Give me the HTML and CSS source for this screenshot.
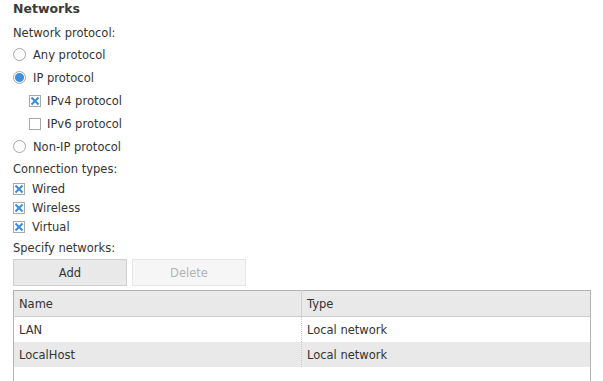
FILE: index.html
```html
<!DOCTYPE html>
<html lang="en">
  <head>
    <meta charset="UTF-8" />
    <title>Networks</title>
    <link rel="stylesheet" href="styles.css">
  </head>
  <body>
    <section class="networks">
      <h2 class="titel">Networks</h2>
      <p class="field-label">Network protocol:</p>
      <ul class="options">
        <li class="option"><span class="radio"></span>Any protocol</li>
        <li class="option"><span class="radio checked"></span>IP protocol</li>
        <li class="option sub"><span class="check checked"></span>IPv4 protocol</li>
        <li class="option sub"><span class="check"></span>IPv6 protocol</li>
        <li class="option"><span class="radio"></span>Non-IP protocol</li>
      </ul>
      <p class="field-label">Connection types:</p>
      <ul class="options tight">
        <li class="option"><span class="check checked"></span>Wired</li>
        <li class="option"><span class="check checked"></span>Wireless</li>
        <li class="option"><span class="check checked"></span>Virtual</li>
      </ul>
      <p class="field-label specify">Specify networks:</p>
      <div class="buttons">
        <button class="knap">Add</button>
        <button class="knap" disabled>Delete</button>
      </div>
      <table class="grid">
        <thead>
          <tr><th>Name</th><th>Type</th></tr>
        </thead>
        <tbody>
          <tr><td>LAN</td><td>Local network</td></tr>
          <tr class="selected"><td>LocalHost</td><td>Local network</td></tr>
          <tr class="empty"><td></td><td></td></tr>
        </tbody>
      </table>
    </section>
  </body>
</html>
```

FILE: styles.css
```css
body {
  margin: 0;
  padding: 1px 13px 0;
  font-family: "DejaVu Sans", sans-serif;
  font-size: 11.5px;
  color: #333333;
  background: #ffffff;
}

.titel {
  margin: 0;
  font-size: 12.5px;
  line-height: 16px;
  font-weight: bold;
  color: #3a3a3a;
}

.field-label {
  margin: 3px 0 0;
  line-height: 16px;
}
.titel + .field-label {
  margin-top: 8px;
}
.specify {
  margin-top: 4px;
}

.options {
  list-style: none;
  margin: 2px 0 0;
  padding: 0;
}
.option {
  display: flex;
  align-items: center;
  height: 23px;
}
.tight {
  margin-top: 2px;
}
.tight .option {
  height: 19px;
}
.sub {
  padding-left: 16px;
}

.radio {
  width: 11px;
  height: 11px;
  border: 1px solid #a6a6a6;
  border-radius: 50%;
  background: #ffffff;
  margin-right: 7px;
  flex: none;
}
.radio.checked {
  background: radial-gradient(circle, #3d8fe0 0 4px, #ffffff 5px);
}

.check {
  position: relative;
  width: 10px;
  height: 10px;
  border: 1px solid #a9a9a9;
  background: #ffffff;
  margin-right: 7px;
  flex: none;
}
.sub .check {
  margin-right: 6px;
}
.check.checked::before,
.check.checked::after {
  content: "";
  position: absolute;
  left: 0;
  top: 4px;
  width: 10px;
  height: 2px;
  background: #3a8ee0;
  transform: rotate(45deg);
}
.check.checked::after {
  transform: rotate(-45deg);
}

.buttons {
  display: flex;
  gap: 5px;
  margin-top: 3px;
}
.knap {
  width: 114px;
  height: 27px;
  border: 1px solid #cfcfcf;
  background: #e9e9e9;
  font-family: "DejaVu Sans", sans-serif;
  font-size: 11.5px;
  color: #333333;
  padding: 0;
}
.knap:disabled {
  background: #f6f6f6;
  border-color: #e6e6e6;
  color: #b4b4b4;
}

.grid {
  width: 578px;
  margin-top: 4px;
  border-collapse: collapse;
  border: 1px solid #b7b3b5;
  border-bottom: 0;
}
.grid th,
.grid td {
  text-align: left;
  font-weight: normal;
  padding: 0 5px;
  height: 25px;
}
.grid th {
  background: #e9e9e9;
  border-bottom: 1px solid #cccccc;
}
.grid th:first-child {
  width: 277px;
  border-right: 1px solid #d0d0d0;
}
.grid td:first-child {
  border-right: 1px dotted #c8c8c8;
}
.grid .selected td {
  background: #e9e9e9;
}
.grid .empty td {
  height: 14px;
  border-right: 0;
}
```
